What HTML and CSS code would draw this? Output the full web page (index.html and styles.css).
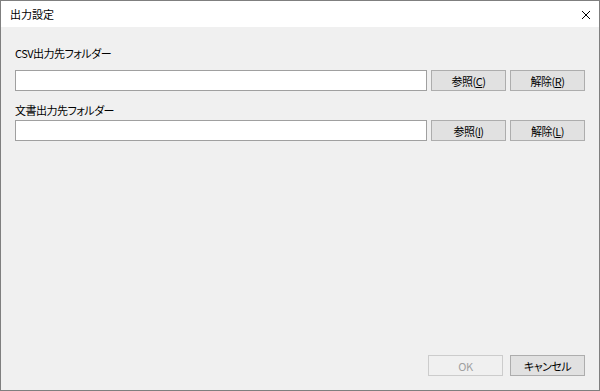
FILE: index.html
```html
<!DOCTYPE html>
<html lang="ja">
<head>
<meta charset="utf-8">
<title>出力設定</title>
<link rel="stylesheet" href="styles.css">
</head>
<body>
<div class="window">
  <div class="titlebar">
    <span class="title">出力設定</span>
    <span class="close">
      <svg width="10" height="10" viewBox="0 0 10 10"><path d="M1 1 L9 9 M9 1 L1 9" stroke="#000" stroke-width="1" fill="none"/></svg>
    </span>
  </div>
  <div class="content">
    <div class="label first">CSV出力先フォルダー</div>
    <div class="row">
      <div class="input"></div>
      <div class="btn">参照(<u>C</u>)</div>
      <div class="btn">解除(<u>R</u>)</div>
    </div>
    <div class="label second">文書出力先フォルダー</div>
    <div class="row">
      <div class="input"></div>
      <div class="btn">参照(<u>I</u>)</div>
      <div class="btn">解除(<u>L</u>)</div>
    </div>
    <div class="footer">
      <div class="btn disabled">OK</div>
      <div class="btn">キャンセル</div>
    </div>
  </div>
</div>
</body>
</html>
```
FILE: styles.css
```css
* { box-sizing: border-box; }
html, body { margin: 0; padding: 0; }
body {
  font-family: "Noto Sans CJK JP", "Noto Sans", sans-serif;
  font-size: 11px;
  font-feature-settings: "palt";
  letter-spacing: -0.5px;
  color: #000;
  background: #f0f0f0;
}
.window {
  width: 600px;
  height: 391px;
  border: 1px solid #7f7f7f;
  background: #f0f0f0;
  display: flex;
  flex-direction: column;
}
.titlebar {
  height: 26px;
  background: #fff;
  display: flex;
  align-items: center;
  justify-content: space-between;
  padding-left: 9px;
  padding-right: 8px;
  flex: none;
}
.title { line-height: 16px; letter-spacing: 0; }
.close { display: flex; width: 10px; height: 10px; margin-top: 1px; }
.content {
  flex: 1;
  display: flex;
  flex-direction: column;
  padding: 18px 14px 14px 14px;
}
.label { line-height: 16px; }
.label.first { margin-bottom: 9px; }
.label.second { margin-top: 11px; margin-bottom: 2px; }
.row {
  display: flex;
  gap: 4px;
  height: 21px;
}
.input {
  width: 412px;
  height: 21px;
  background: #fff;
  border: 1px solid #a0a0a0;
}
.btn {
  width: 75px;
  height: 21px;
  background: #e1e1e1;
  border: 1px solid #adadad;
  display: flex;
  align-items: center;
  justify-content: center;
  line-height: 16px;
}
.btn u { text-underline-offset: 1px; }
.footer {
  margin-top: auto;
  display: flex;
  justify-content: flex-end;
  gap: 7px;
}
.btn.disabled {
  background: #f0f0f0;
  border-color: #cccccc;
  color: #a0a0a0;
}
```
